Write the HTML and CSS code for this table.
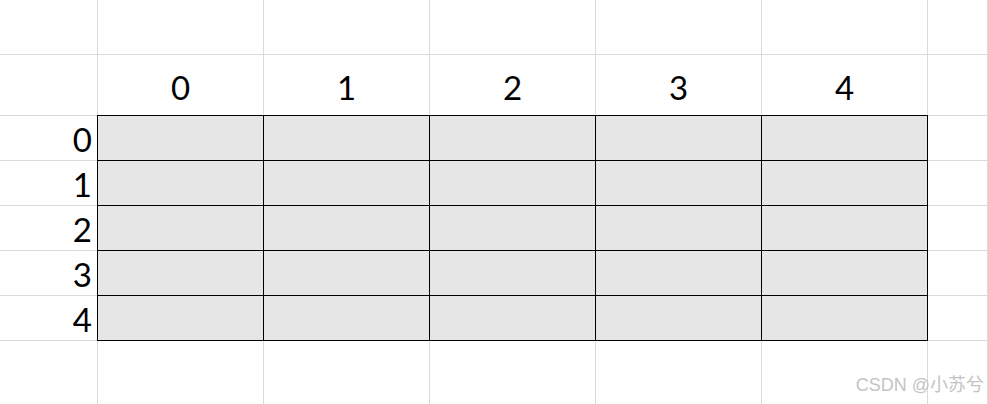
FILE: index.html
```html
<!DOCTYPE html>
<html>
<head>
<meta charset="utf-8">
<link rel="stylesheet" href="styles.css">
</head>
<body>
<div class="sheet">
  <div class="cell"></div><div class="cell"></div><div class="cell"></div><div class="cell"></div><div class="cell"></div><div class="cell"></div><div class="cell"></div>

  <div class="cell"></div>
  <div class="cell head">0</div>
  <div class="cell head">1</div>
  <div class="cell head">2</div>
  <div class="cell head">3</div>
  <div class="cell head">4</div>
  <div class="cell"></div>

  <div class="cell label">0</div><div class="cell data"></div><div class="cell data"></div><div class="cell data"></div><div class="cell data"></div><div class="cell data"></div><div class="cell"></div>
  <div class="cell label">1</div><div class="cell data"></div><div class="cell data"></div><div class="cell data"></div><div class="cell data"></div><div class="cell data"></div><div class="cell"></div>
  <div class="cell label">2</div><div class="cell data"></div><div class="cell data"></div><div class="cell data"></div><div class="cell data"></div><div class="cell data"></div><div class="cell"></div>
  <div class="cell label">3</div><div class="cell data"></div><div class="cell data"></div><div class="cell data"></div><div class="cell data"></div><div class="cell data"></div><div class="cell"></div>
  <div class="cell label">4</div><div class="cell data"></div><div class="cell data"></div><div class="cell data"></div><div class="cell data"></div><div class="cell data"></div><div class="cell"></div>

  <div class="cell open"></div><div class="cell open"></div><div class="cell open"></div><div class="cell open"></div><div class="cell open"></div><div class="cell open"></div><div class="cell open"></div>
</div>
<div class="watermark">CSDN @小苏兮</div>
</body>
</html>
```
FILE: styles.css
```css
html, body {
  margin: 0;
  padding: 0;
  background: #ffffff;
}
body {
  width: 988px;
  height: 404px;
  overflow: hidden;
  position: relative;
  font-family: "Lato", "DejaVu Sans", sans-serif;
  font-weight: 400;
  color: #000;
}
.sheet {
  display: grid;
  grid-template-columns: 98px repeat(5, 166px) 1fr;
  grid-template-rows: 55px 61px repeat(5, 45px) 1fr;
  width: 988px;
  height: 404px;
}
.cell {
  box-sizing: border-box;
  border-right: 1px solid #dadada;
  border-bottom: 1px solid #dadada;
  font-size: 33px;
  line-height: 32px;
}
.head {
  display: flex;
  align-items: flex-end;
  justify-content: center;
  padding-bottom: 12px;
}
.label {
  display: flex;
  align-items: flex-end;
  justify-content: flex-end;
  padding-right: 5px;
  padding-bottom: 5px;
}
.data {
  margin: -1px 0 0 -1px;
  border: 1px solid #000;
  background: #e6e6e6;
}
.open {
  border-bottom: none;
}
.watermark {
  position: absolute;
  right: 4px;
  bottom: 9px;
  font-family: "Liberation Sans", "Noto Sans CJK SC", sans-serif;
  font-weight: 400;
  font-size: 18px;
  line-height: 20px;
  color: #c4c4c4;
}
```
